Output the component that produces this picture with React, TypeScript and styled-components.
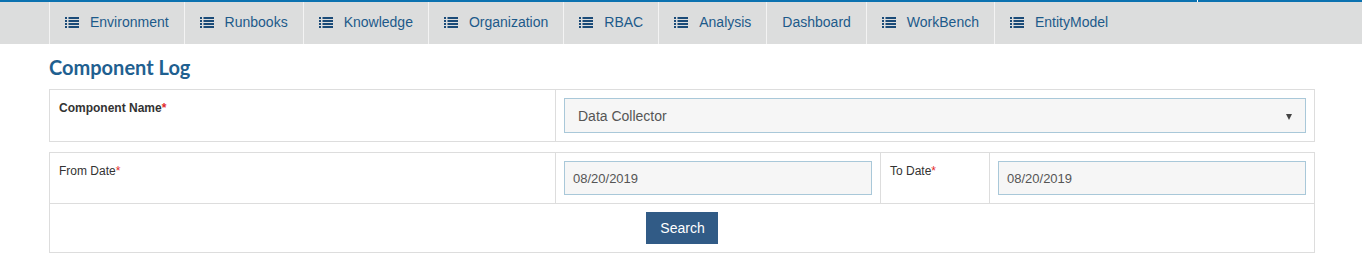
import React from "react";
import styled, { createGlobalStyle } from "styled-components";

const GlobalStyle = createGlobalStyle`
  html, body { margin: 0; padding: 0; background: #ffffff; }
  body { font-family: "Liberation Sans", Arial, sans-serif; color: #333; }
  * { box-sizing: border-box; }
`;

const TopStrip = styled.div`
  display: flex;
  height: 2px;
  gap: 1px;
  background: #ffffff;
`;

const StripSegment = styled.div<{ $width?: string }>`
  background: #0b72b0;
  flex: ${(p) => (p.$width ? `0 0 ${p.$width}` : "1 1 auto")};
`;

const NavBar = styled.nav`
  display: flex;
  height: 42px;
  background: #dcdddd;
  padding-left: 49px;
`;

const NavItem = styled.a`
  display: flex;
  align-items: flex-start;
  gap: 11px;
  padding: 10px 15px 0 15px;
  border-left: 1px solid #f3f3f3;
  font-size: 14px;
  line-height: 20px;
  color: #1d5a8a;
  text-decoration: none;
  white-space: nowrap;
`;

const IconWrap = styled.span`
  display: flex;
  align-items: center;
  height: 20px;
`;

const ListIcon = () => (
  <svg width="14" height="11" viewBox="0 0 14 11" aria-hidden="true">
    {[0, 3, 6, 9].map((y) => (
      <g key={y} fill="#1b4b78">
        <rect x="0" y={y} width="2" height="2" />
        <rect x="3.5" y={y} width="10.5" height="2" />
      </g>
    ))}
  </svg>
);

const Page = styled.main`
  padding: 0 47px 20px 49px;
`;

const Title = styled.h2`
  margin: 0;
  padding: 12px 0 10px 0;
  font-family: Lato, "Open Sans", sans-serif;
  font-weight: 700;
  font-size: 20px;
  line-height: 23px;
  color: #1f6090;
`;

const FormTable = styled.table<{ $gap?: number }>`
  width: 100%;
  border-collapse: collapse;
  margin-bottom: ${(p) => p.$gap ?? 0}px;
  table-layout: fixed;
`;

const Cell = styled.td<{ $width?: number; $center?: boolean }>`
  border: 1px solid #dddddd;
  padding: 8px;
  vertical-align: top;
  width: ${(p) => (p.$width ? `${p.$width}px` : "auto")};
  text-align: ${(p) => (p.$center ? "center" : "left")};
`;

const Label = styled.span<{ $bold?: boolean }>`
  display: block;
  padding: 2px 0 0 1px;
  font-size: 12px;
  line-height: 17px;
  font-weight: ${(p) => (p.$bold ? 700 : 400)};
  color: #333;
`;

const Required = styled.span`
  color: #e32b2b;
`;

const SelectBox = styled.div`
  display: flex;
  align-items: center;
  justify-content: space-between;
  height: 35px;
  padding: 0 13px 0 13px;
  border: 1px solid #a9c8d9;
  background: #f6f6f6;
  font-size: 14px;
  color: #555;
`;

const Caret = styled.span`
  width: 0;
  height: 0;
  border-left: 3.5px solid transparent;
  border-right: 3.5px solid transparent;
  border-top: 6px solid #444;
  margin-top: 2px;
`;

const DateInput = styled.div`
  display: flex;
  align-items: center;
  height: 34px;
  padding: 0 8px;
  border: 1px solid #a9c8d9;
  background: #f6f6f6;
  font-size: 13px;
  color: #555;
`;

const SearchButton = styled.button`
  font-family: "Liberation Sans", Arial, sans-serif;
  font-size: 14px;
  line-height: 20px;
  padding: 6px 13px 6px 14px;
  border: none;
  background: #315b86;
  color: #ffffff;
  cursor: pointer;
`;

const navItems = [
  { label: "Environment", icon: true },
  { label: "Runbooks", icon: true },
  { label: "Knowledge", icon: true },
  { label: "Organization", icon: true },
  { label: "RBAC", icon: true },
  { label: "Analysis", icon: true },
  { label: "Dashboard", icon: false },
  { label: "WorkBench", icon: true },
  { label: "EntityModel", icon: true },
];

export default function App() {
  return (
    <>
      <GlobalStyle />
      <TopStrip>
        <StripSegment $width="1197px" />
        <StripSegment />
      </TopStrip>
      <NavBar>
        {navItems.map((item) => (
          <NavItem key={item.label} href="#">
            {item.icon && (
              <IconWrap>
                <ListIcon />
              </IconWrap>
            )}
            {item.label}
          </NavItem>
        ))}
      </NavBar>
      <Page>
        <Title>Component Log</Title>
        <FormTable $gap={10}>
          <tbody>
            <tr>
              <Cell $width={506}>
                <Label $bold>
                  Component Name<Required>*</Required>
                </Label>
              </Cell>
              <Cell>
                <SelectBox>
                  <span>Data Collector</span>
                  <Caret />
                </SelectBox>
              </Cell>
            </tr>
          </tbody>
        </FormTable>
        <FormTable>
          <tbody>
            <tr>
              <Cell $width={506}>
                <Label>
                  From Date<Required>*</Required>
                </Label>
              </Cell>
              <Cell $width={325}>
                <DateInput>08/20/2019</DateInput>
              </Cell>
              <Cell $width={109}>
                <Label>
                  To Date<Required>*</Required>
                </Label>
              </Cell>
              <Cell>
                <DateInput>08/20/2019</DateInput>
              </Cell>
            </tr>
            <tr>
              <Cell colSpan={4} $center>
                <SearchButton>Search</SearchButton>
              </Cell>
            </tr>
          </tbody>
        </FormTable>
      </Page>
    </>
  );
}
